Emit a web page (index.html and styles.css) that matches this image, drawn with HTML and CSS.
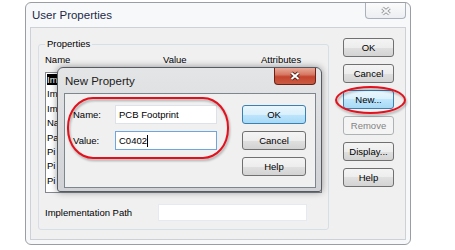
FILE: index.html
```html
<!DOCTYPE html>
<html lang="en">
<head>
    <meta charset="UTF-8">
    <title>User Properties</title>
    <link rel="stylesheet" href="styles.css">
</head>
<body>
    <div class="stage">
        <div class="window">
            <div class="titlebar">
                <span class="title">User Properties</span>
                <span class="close close-idle">
                    <svg width="12" height="10" viewBox="0 0 12 10">
                        <path d="M2.5 2L9.5 8M9.5 2L2.5 8" stroke="#8a8f96" stroke-width="3.6"/>
                        <path d="M2.5 2L9.5 8M9.5 2L2.5 8" stroke="#f4f4f4" stroke-width="1.8"/>
                    </svg>
                </span>
            </div>
            <div class="client">
                <fieldset class="group">
                    <legend>Properties</legend>
                    <div class="list-head">
                        <span>Name</span>
                        <span>Value</span>
                        <span>Attributes</span>
                    </div>
                    <!-- rows are mostly hidden behind the dialog, only the first letters show -->
                    <ul class="list">
                        <li><span class="sel">Im</span></li>
                        <li>Im</li>
                        <li>Im</li>
                        <li>Na</li>
                        <li>Pa</li>
                        <li>Pi</li>
                        <li>Pi</li>
                        <li>Pi</li>
                    </ul>
                    <div class="path-row">
                        <span class="path-label">Implementation Path</span>
                        <div class="textbox path-box"></div>
                    </div>
                </fieldset>
                <div class="side-buttons">
                    <button class="btn">OK</button>
                    <button class="btn">Cancel</button>
                    <button class="btn hot">New...</button>
                    <button class="btn" disabled>Remove</button>
                    <button class="btn">Display...</button>
                    <button class="btn">Help</button>
                </div>
            </div>
        </div>

        <div class="dialog">
            <div class="dialog-bar">
                <span class="title">New Property</span>
                <span class="close close-red">
                    <svg width="12" height="10" viewBox="0 0 12 10">
                        <path d="M2.5 2L9.5 8M9.5 2L2.5 8" stroke="#5a2318" stroke-width="3.8"/>
                        <path d="M2.5 2L9.5 8M9.5 2L2.5 8" stroke="#ffffff" stroke-width="2"/>
                    </svg>
                </span>
            </div>
            <div class="dialog-client">
                <div class="form">
                    <span class="label">Name:</span>
                    <div class="textbox">PCB Footprint</div>
                    <span class="label">Value:</span>
                    <div class="textbox focused">C0402<span class="caret"></span></div>
                </div>
                <div class="dialog-buttons">
                    <button class="btn hot">OK</button>
                    <button class="btn">Cancel</button>
                    <button class="btn">Help</button>
                </div>
            </div>
        </div>

        <div class="mark mark-form"></div>
        <div class="mark mark-new"></div>
    </div>
</body>
</html>
```

FILE: styles.css
```css
* {
    box-sizing: border-box;
}

body {
    margin: 0;
    background-color: #fff;
    font-family: "Liberation Sans", Arial, sans-serif;
    font-size: 9.5px;
    color: #000;
}

.stage {
    position: relative;
    width: 455px;
    height: 250px;
    overflow: hidden;
    padding: 2px 0 0 25px;
}

/* main window */
.window {
    width: 386px;
    height: 243px;
    border: 1px solid #9a9ea4;
    border-radius: 6px;
    background-color: #f7f8fa;
    padding: 0 4px 4px 4px;
    display: flex;
    flex-direction: column;
}

.titlebar {
    height: 24px;
    display: flex;
    justify-content: space-between;
    align-items: flex-start;
}

.title {
    align-self: center;
    padding-left: 2px;
    font-size: 11.5px;
    color: #1c2a48;
}

.close {
    width: 41px;
    height: 16px;
    display: flex;
    justify-content: center;
    align-items: center;
    border-radius: 0 0 4px 4px;
}

.close-idle {
    border: 1px solid #aab1ba;
    border-top: none;
    background: linear-gradient(#fbfbfb, #eceef1);
}

.client {
    flex: 1;
    border: 1px solid #cdd1d6;
    background-color: #f0f0f0;
    display: flex;
    gap: 14px;
    padding: 10px 11px 9px 7px;
}

/* properties group */
.group {
    margin: 0;
    width: 291px;
    border: 1px solid #d5dfe5;
    border-radius: 3px;
    padding: 0 6px 8px 6px;
}

.group legend {
    padding: 0 2px;
    line-height: 12px;
}

.list-head {
    margin-top: 4px;
    display: grid;
    grid-template-columns: 118px 98px 1fr;
    line-height: 12px;
}

.list {
    margin: 6px 0 0 0;
    padding: 0;
    list-style: none;
    height: 121px;
    border: 1px solid #828790;
    background-color: #fff;
    overflow: hidden;
}

.list li {
    line-height: 14.4px;
    padding-left: 1px;
    white-space: nowrap;
}

.sel {
    background-color: #000;
    color: #fff;
    padding-right: 3px;
}

.path-row {
    margin-top: 11px;
    height: 17px;
    display: flex;
    align-items: center;
}

.path-label {
    width: 113px;
}

.textbox {
    height: 19px;
    border: 1px solid #dde2e8;
    background-color: #fff;
    padding-left: 3px;
    display: flex;
    align-items: center;
    white-space: nowrap;
}

.path-box {
    width: 149px;
    height: 17px;
    border-color: #e6e9ed;
}

.textbox.focused {
    border-color: #6ea6dd;
}

.caret {
    width: 1px;
    height: 12px;
    background-color: #000;
}

/* buttons */
.side-buttons,
.dialog-buttons {
    display: flex;
    flex-direction: column;
    gap: 7px;
}

.btn {
    width: 51px;
    height: 19px;
    padding: 0;
    border: 1px solid #707070;
    border-radius: 3px;
    background: linear-gradient(#f4f4f4 0%, #ededed 50%, #e0e0e0 50%, #d3d3d3 100%);
    font: inherit;
    color: #000;
}

.btn.hot {
    border-color: #3c7fb1;
    background: linear-gradient(#eaf6fd 0%, #d9f0fc 50%, #bee6fd 50%, #a7d9f5 100%);
}

.btn:disabled {
    border-color: #adb2b5;
    background: #f4f4f4;
    color: #838383;
}

/* new property dialog */
.dialog {
    position: absolute;
    left: 57px;
    top: 67px;
    width: 265px;
    height: 125px;
    border: 1px solid #555b61;
    border-radius: 6px 6px 3px 3px;
    background: linear-gradient(#e4e5e7, #d0d2d5);
    box-shadow: 0 0 7px rgba(0, 0, 0, 0.4);
    padding: 0 5px 3px 6px;
    display: flex;
    flex-direction: column;
}

.dialog-bar {
    height: 25px;
    display: flex;
    justify-content: space-between;
    align-items: flex-start;
}

.dialog-bar .title {
    padding-left: 1px;
    font-size: 11.5px;
    color: #1b1b1b;
}

.close-red {
    width: 42px;
    height: 17px;
    border: 1px solid #6b2216;
    border-top: none;
    background: linear-gradient(#e9a898 0%, #d67a65 40%, #c4452f 55%, #c95a42 100%);
}

.dialog-client {
    flex: 1;
    border: 1px solid #7d858d;
    background-color: #f0f0f0;
    display: flex;
    justify-content: space-between;
    padding: 11px 9px 0 8px;
}

.form {
    display: grid;
    grid-template-columns: 42px 102px;
    grid-auto-rows: 19px;
    row-gap: 7px;
    align-items: center;
    align-content: start;
}

.dialog-buttons .btn {
    width: 64px;
}

/* red annotation marks */
.mark {
    position: absolute;
    border: 2px solid #e5101c;
    filter: drop-shadow(1px 2px 1px rgba(0, 0, 0, 0.3));
}

.mark-form {
    left: 67px;
    top: 97px;
    width: 162px;
    height: 62px;
    border-radius: 26px / 30px;
}

.mark-new {
    left: 335px;
    top: 86px;
    width: 71px;
    height: 28px;
    border-radius: 50%;
}
```
